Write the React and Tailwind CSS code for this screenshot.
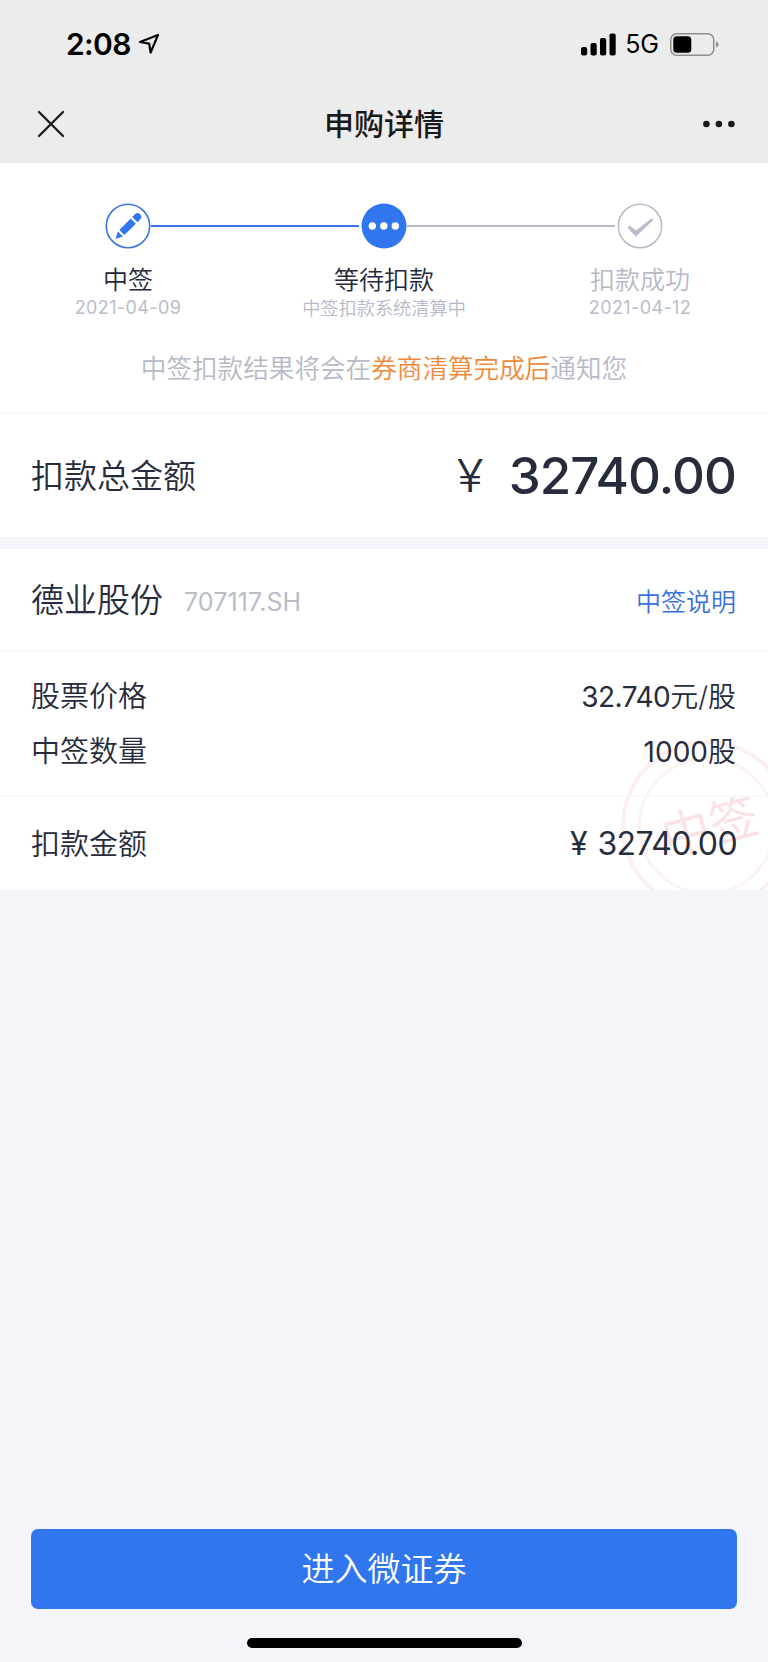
import React from "react";

const steps = [
  { id: 1, title: "中签", note: "2021-04-09", status: "done", isDate: true },
  { id: 2, title: "等待扣款", note: "中签扣款系统清算中", status: "active" },
  { id: 3, title: "扣款成功", note: "2021-04-12", status: "todo", isDate: true },
];

const StatusBar = () => (
  <div className="flex h-[84px] items-center justify-between pr-[49px] pl-[66px] text-black">
    <div className="flex items-center pt-1">
      <span className="text-[30px] leading-8 font-semibold tracking-[-0.6px]">2:08</span>
      <svg width="22" height="22" viewBox="0 0 22 22" className="ml-[7px]">
        <path
          d="M2 9 L20 2 L12.6 19.6 L11.2 10.6 Z"
          fill="none"
          stroke="currentColor"
          strokeWidth="2.2"
          strokeLinejoin="round"
        />
      </svg>
    </div>

    <div className="flex items-center pt-1">
      <svg width="35" height="23" viewBox="0 0 35 23" fill="currentColor">
        <rect x="0" y="14" width="6.2" height="8.5" rx="2" />
        <rect x="9.5" y="10" width="6.2" height="12.5" rx="2" />
        <rect x="19" y="5" width="6.2" height="17.5" rx="2" />
        <rect x="28.5" y="0.5" width="6.2" height="22" rx="2" />
      </svg>
      <span className="ml-[9px] text-[25px] leading-8">5G</span>
      <svg width="49" height="23" viewBox="0 0 49 23" className="ml-[11px]">
        <rect
          x="0.75"
          y="0.75"
          width="43"
          height="21.5"
          rx="6"
          fill="none"
          stroke="#8e8e8e"
          strokeWidth="1.5"
        />
        <rect x="3.3" y="3.3" width="18" height="16.4" rx="3.5" fill="black" />
        <path d="M46 8.5 Q48.6 9.5 48.6 11.5 Q48.6 13.5 46 14.5 Z" fill="#8e8e8e" />
      </svg>
    </div>
  </div>
);

const NavBar = () => (
  <div className="flex h-[80px] items-center justify-between pr-[33px] pl-[37px] text-[#191919]">
    <svg width="28" height="28" viewBox="0 0 28 28">
      <path
        d="M2 2 L26 26 M26 2 L2 26"
        stroke="currentColor"
        strokeWidth="2.3"
        strokeLinecap="round"
      />
    </svg>
    <h1 className="text-[30px] leading-10 font-medium">申购详情</h1>
    <svg width="32" height="8" viewBox="0 0 32 8" fill="currentColor">
      <circle cx="3.4" cy="4" r="3.3" />
      <circle cx="15.9" cy="4" r="3.3" />
      <circle cx="28.4" cy="4" r="3.3" />
    </svg>
  </div>
);

const StepIcon = ({ status }) => {
  if (status === "done") {
    return (
      <svg width="46" height="46" viewBox="0 0 46 46">
        <circle cx="23" cy="23" r="21.7" fill="white" stroke="#3b74e0" strokeWidth="1.6" />
        <g fill="#3076ee" transform="translate(23 23) rotate(-45)">
          <path d="M-18 0.3 L-11 -3.3 V3.9 Z" />
          <rect x="-9" y="-3.3" width="16.2" height="7.2" />
          <path d="M9.4 -3.4 H13.2 A3.7 3.7 0 0 1 13.2 4 H9.4 Z" />
        </g>
      </svg>
    );
  }

  if (status === "active") {
    return (
      <svg width="46" height="46" viewBox="0 0 46 46">
        <circle cx="23" cy="23" r="22.5" fill="#3076ee" />
        <g fill="white">
          <circle cx="11.3" cy="23" r="3.7" />
          <circle cx="22.8" cy="23" r="3.7" />
          <circle cx="34.3" cy="23" r="3.7" />
        </g>
      </svg>
    );
  }

  return (
    <svg width="46" height="46" viewBox="0 0 46 46">
      <circle cx="23" cy="23" r="21.7" fill="white" stroke="#b9bcca" strokeWidth="1.6" />
      <path d="M10.6 24.8 L12.8 22.4 L18.8 27.4 L35 15 L36.3 17 L18.8 33.8 Z" fill="#b9bcca" />
    </svg>
  );
};

const Stepper = () => (
  <section className="h-[251px] border-b-2 border-[#f7f7f9] bg-white pt-[40px]">
    <div className="flex items-center px-[105px]">
      <StepIcon status={steps[0].status} />
      <div className="mr-[2px] h-[2px] flex-1 bg-[#3b74e0]" />
      <StepIcon status={steps[1].status} />
      <div className="mr-[2px] h-[2px] flex-1 bg-[#b9bcca]" />
      <StepIcon status={steps[2].status} />
    </div>

    <div className="grid grid-cols-[256px_256px_256px]">
      {steps.map((step) => (
        <div key={step.id} className="flex flex-col items-center pt-[15px]">
          <span
            className={
              step.status === "todo"
                ? "text-[25px] leading-8 font-[350] text-[#b6b9c8]"
                : "text-[25px] leading-8 font-[350] text-[#23283a]"
            }
          >
            {step.title}
          </span>
          <span
            className={
              step.isDate
                ? "text-[18px] leading-6 tracking-[0.4px] text-[#b9bccb]"
                : "text-[18.2px] leading-6 font-[350] text-[#b6b9c8]"
            }
          >
            {step.note}
          </span>
        </div>
      ))}
    </div>

    <p className="mt-[29px] text-center text-[25.6px] leading-10 font-[350] text-[#b6b9c8]">
      中签扣款结果将会在<span className="text-[#f0883a]">券商清算完成后</span>通知您
    </p>
  </section>
);

const TotalAmount = () => (
  <section className="flex h-[123px] items-center justify-between bg-white pr-[32px] pl-[31px]">
    <span className="text-[33px] leading-10 font-[350]">扣款总金额</span>
    <div className="flex items-center">
      <span className="mr-[26px] scale-x-110 text-[45px] leading-none font-[350]">¥</span>
      <span className="text-[51px] leading-none font-medium tracking-[-0.9px]">
        32740.00
      </span>
    </div>
  </section>
);

const DetailRow = ({ label, children }) => (
  <div className="flex h-[55px] items-center justify-between">
    <span className="text-[29px] leading-10 font-[350]">{label}</span>
    <span className="text-[28px] leading-10">{children}</span>
  </div>
);

// Faint winning-lot seal, cut off by the card's right and bottom edges
const Stamp = () => (
  <div className="absolute top-[191px] left-[621px] flex size-[172px] items-center justify-center rounded-full border-[4px] border-[#fdeff0]">
    <div className="flex size-[138px] shrink-0 items-center justify-center rounded-full border-[3px] border-[#fdf2f3]">
      <span className="ml-[7px] shrink-0 -rotate-[15deg] text-[49px] leading-none whitespace-nowrap text-[#fbe3e5]">
        中签
      </span>
    </div>
  </div>
);

const StockCard = () => (
  <section className="relative h-[341px] overflow-hidden bg-white">
    <Stamp />
    <div className="relative">
      <div className="flex h-[103px] items-center justify-between border-b-2 border-[#f7f7f9] pr-[32px] pl-[31px]">
        <div className="flex items-center">
          <h2 className="text-[33px] leading-10 font-[350]">德业股份</h2>
          <span className="ml-[21px] pt-1 text-[25px] leading-8 tracking-[0.1px] text-[#b9bcca]">
            707117.SH
          </span>
        </div>
        <a className="pt-1 text-[25px] leading-8 font-[350] text-[#3a70dc]">中签说明</a>
      </div>

      <div className="h-[145px] border-b-2 border-[#f9f9fa] pt-[17px] pr-[32px] pl-[31px]">
        <DetailRow label="股票价格">
          <span className="tracking-[-0.5px]">32.740</span>
          <span className="font-[350]">元/股</span>
        </DetailRow>
        <DetailRow label="中签数量">
          1000<span className="font-[350]">股</span>
        </DetailRow>
      </div>

      <div className="flex h-[93px] items-center justify-between pr-[31px] pl-[31px]">
        <span className="pt-[2px] text-[29px] leading-10 font-[350]">扣款金额</span>
        <span className="text-[32px] leading-10 tracking-[-0.6px]">
          <span className="mr-[2px]">¥</span> 32740.00
        </span>
      </div>
    </div>
  </section>
);

const App = () => {
  return (
    <div className="flex h-[1662px] w-[768px] flex-col overflow-hidden bg-[#f3f5fa] font-[Inter,'Noto_Sans_CJK_SC',sans-serif] text-[#272c3d]">
      <header className="h-[163px] shrink-0 bg-[#ececec]">
        <StatusBar />
        <NavBar />
      </header>

      <main className="flex flex-col gap-[12px]">
        <div>
          <Stepper />
          <TotalAmount />
        </div>
        <StockCard />
      </main>

      <footer className="mt-auto flex flex-col items-center px-[31px] pb-[14px]">
        <button className="h-[80px] w-full rounded-[7px] bg-[#3076ee] text-[33px] leading-10 font-[350] text-white">
          进入微证券
        </button>
        <div className="mt-[29px] h-[10px] w-[275px] rounded-full bg-black" />
      </footer>
    </div>
  );
};

export default App;
